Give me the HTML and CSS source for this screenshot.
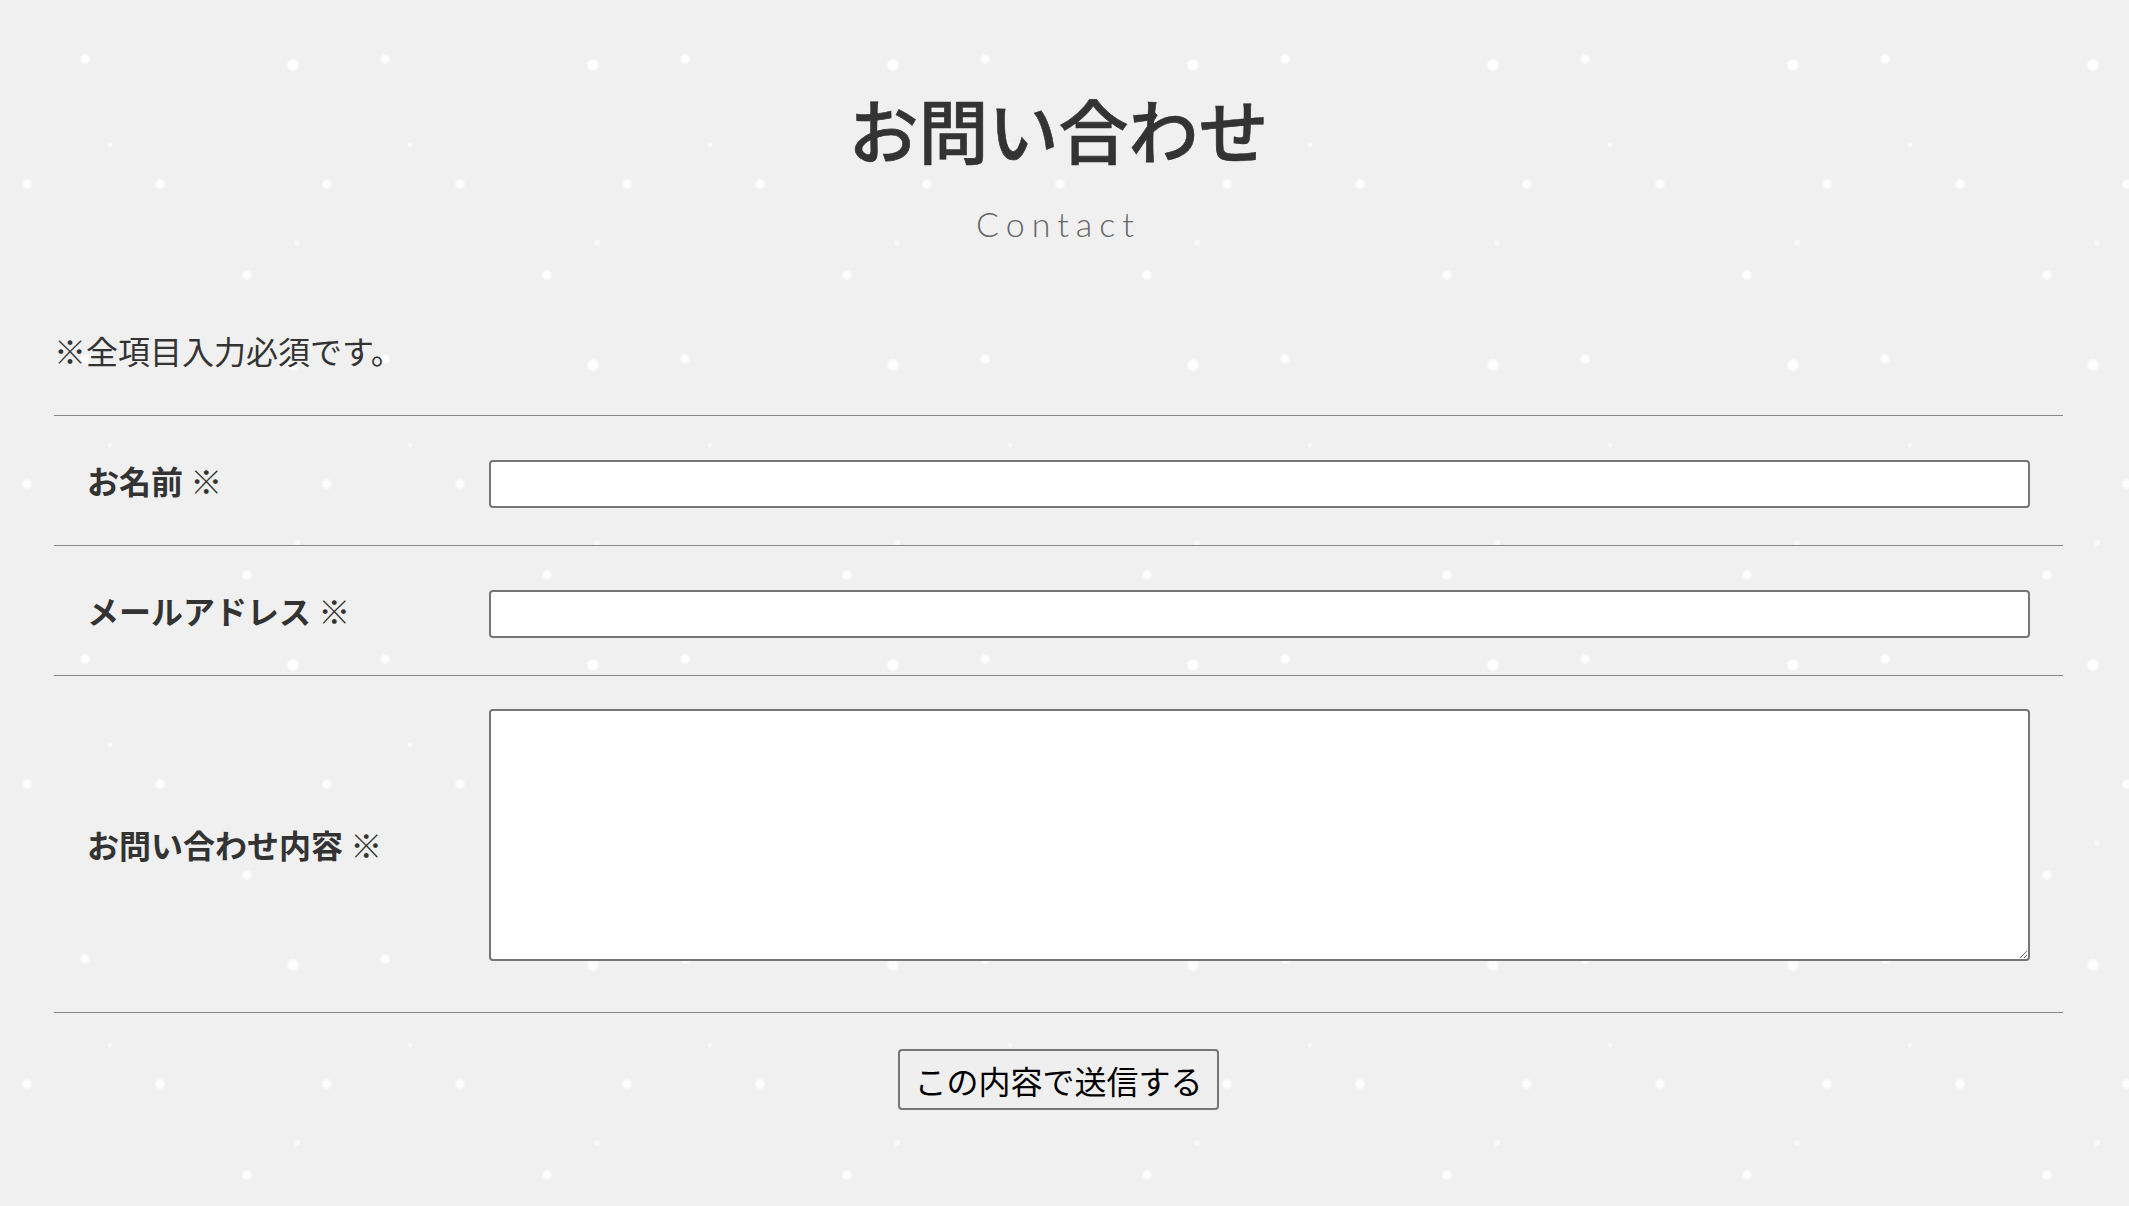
FILE: index.html
```html
<!DOCTYPE html>
<html lang="ja">
<head>
    <meta charset="UTF-8">
    <title>お問い合わせ</title>
    <link rel="stylesheet" href="styles.css">
</head>
<body>

    <main class="contact">
        <div class="page-title">
            <h1>お問い合わせ</h1>
            <p class="sub">Contact</p>
        </div>

        <p class="note">※全項目入力必須です。</p>

        <form class="contact-form" action="#" method="post">
            <div class="form-table">
                <div class="form-row">
                    <label class="form-label" for="name">お名前 ※</label>
                    <div class="form-field">
                        <input type="text" id="name" name="name">
                    </div>
                </div>
                <div class="form-row">
                    <label class="form-label" for="email">メールアドレス ※</label>
                    <div class="form-field">
                        <input type="email" id="email" name="email">
                    </div>
                </div>
                <div class="form-row">
                    <label class="form-label" for="message">お問い合わせ内容 ※</label>
                    <div class="form-field message">
                        <textarea id="message" name="message"></textarea>
                    </div>
                </div>
            </div>

            <div class="actions">
                <button type="submit">この内容で送信する</button>
            </div>
        </form>
    </main>

</body>
</html>
```

FILE: styles.css
```css
body {
    margin: 0;
    padding: 0;
    min-height: 1206px;
    font-family: "Noto Sans CJK JP", "Noto Sans", sans-serif;
    color: #333;
    background-color: #f0f0f0;
    /* snow dots, one 300px tile */
    background-image:
        radial-gradient(circle at 85px 59px, rgba(255,255,255,0.9) 0 3px, rgba(255,255,255,0) 6px),
        radial-gradient(circle at 293px 65px, rgba(255,255,255,0.95) 0 4px, rgba(255,255,255,0) 7px),
        radial-gradient(circle at 110px 145px, rgba(255,255,255,0.9) 0 1px, rgba(255,255,255,0) 3px),
        radial-gradient(circle at 160px 184px, rgba(255,255,255,0.9) 0 3px, rgba(255,255,255,0) 6px),
        radial-gradient(circle at 27px 184px, rgba(255,255,255,0.9) 0 3px, rgba(255,255,255,0) 6px),
        radial-gradient(circle at 297px 243px, rgba(255,255,255,0.6) 0 2px, rgba(255,255,255,0) 4px),
        radial-gradient(circle at 247px 275px, rgba(255,255,255,0.95) 0 3px, rgba(255,255,255,0) 6px);
    background-size: 300px 300px;
}

.contact {
    padding: 80px 66px 40px 54px;
}

.page-title {
    text-align: center;
}

.page-title h1 {
    margin: 0;
    font-size: 70px;
    font-weight: 500;
    line-height: 1.4;
    color: #333;
    -webkit-text-stroke: 0.6px #333;
}

.page-title .sub {
    margin: 22px 0 0;
    font-family: Lato, "Noto Sans", sans-serif;
    font-size: 34px;
    font-weight: 300;
    line-height: 1.4;
    letter-spacing: 7px;
    color: #666;
}

.note {
    margin: 78px 0 41px;
    font-size: 32px;
    line-height: 1.5;
}

.form-table {
    border-bottom: 1px solid #888;
}

.form-row {
    display: grid;
    grid-template-columns: 435px 1fr;
    border-top: 1px solid #888;
}

.form-label {
    align-self: center;
    padding-left: 33px;
    font-size: 32px;
    font-weight: bold;
}

.form-field {
    padding: 44px 33px 37px 0;
}

.form-field.message {
    padding: 33px 33px 51px 0;
}

.form-field input,
.form-field textarea {
    display: block;
    box-sizing: border-box;
    width: 100%;
    margin: 0;
    border: 2px solid #767676;
    border-radius: 4px;
    background: #fff;
    font-family: inherit;
    font-size: 28px;
}

.form-field input {
    height: 48px;
}

.form-field textarea {
    height: 252px;
}

.actions {
    text-align: center;
    margin-top: 36px;
}

.actions button {
    font-family: "Noto Sans CJK JP", sans-serif;
    font-size: 32px;
    line-height: 1.4;
    color: #000;
    background: #efefef;
    border: 2px solid #767676;
    border-radius: 4px;
    padding: 7px 14px 6px;
    cursor: pointer;
}
```
